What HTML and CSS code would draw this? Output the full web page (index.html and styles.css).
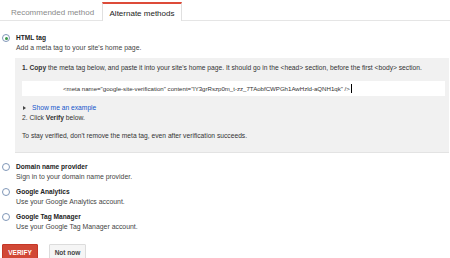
FILE: index.html
```html
<!DOCTYPE html>
<html>
<head>
<meta charset="utf-8">
<link rel="stylesheet" href="styles.css">
</head>
<body>
<div class="tabs">
  <div class="tab">Recommended method</div>
  <div class="tab active">Alternate methods</div>
</div>
<div class="options">
  <div class="option first">
    <span class="radio checked"></span>
    <div class="body">
      <div class="title">HTML tag</div>
      <div class="desc">Add a meta tag to your site's home page.</div>
      <div class="box">
        <div class="step"><b>1. Copy</b> the meta tag below, and paste it into your site's home page. It should go in the &lt;head&gt; section, before the first &lt;body&gt; section.</div>
        <div class="code">&lt;meta name="google-site-verification" content="lY3grRszp0m_t-zz_7TAobfCWPGh1AwHzld-aQNH1qk" /&gt;<span class="caret"></span></div>
        <div class="example"><span class="tri"></span><span class="link">Show me an example</span></div>
        <div class="step2">2. Click <b>Verify</b> below.</div>
        <div class="note">To stay verified, don't remove the meta tag, even after verification succeeds.</div>
      </div>
    </div>
  </div>
  <div class="option">
    <span class="radio"></span>
    <div class="body">
      <div class="title">Domain name provider</div>
      <div class="desc">Sign in to your domain name provider.</div>
    </div>
  </div>
  <div class="option">
    <span class="radio"></span>
    <div class="body">
      <div class="title">Google Analytics</div>
      <div class="desc">Use your Google Analytics account.</div>
    </div>
  </div>
  <div class="option">
    <span class="radio"></span>
    <div class="body">
      <div class="title">Google Tag Manager</div>
      <div class="desc">Use your Google Tag Manager account.</div>
    </div>
  </div>
</div>
<div class="actions">
  <button class="btn verify">VERIFY</button>
  <button class="btn notnow">Not now</button>
</div>
</body>
</html>
```
FILE: styles.css
```css
html, body {
  margin: 0;
  padding: 0;
  background: #fff;
}
body {
  width: 450px;
  height: 258px;
  overflow: hidden;
  font-family: "Liberation Sans", Arial, sans-serif;
  font-size: 6.9px;
  color: #333;
}
.tabs {
  display: flex;
  height: 20px;
  padding: 0 0 0 3px;
  border-bottom: 1px solid #e5e5e5;
  box-sizing: content-box;
}
.tab {
  width: 99px;
  box-sizing: border-box;
  display: flex;
  align-items: center;
  justify-content: center;
  padding-top: 4px;
  color: #8a8a8a;
  font-size: 8px;
}
.tab.active {
  width: 80px;
  color: #222;
  background: #fff;
  border: 1px solid #e0e0e0;
  border-top: 2px solid #dd4b39;
  border-bottom: none;
  height: 19px;
  margin-top: 2px;
  padding-top: 1px;
  margin-bottom: -1px;
}
.options {
  padding: 12px 1px 0 2px;
}
.option {
  display: flex;
  margin-bottom: 5px;
}
.option.first {
  margin-bottom: 9px;
}
.radio {
  flex: none;
  width: 6px;
  height: 6px;
  border: 1px solid #8097b8;
  border-radius: 50%;
  margin-top: 1px;
  margin-right: 6px;
  position: relative;
}
.radio.checked::after {
  content: "";
  position: absolute;
  left: 1.5px;
  top: 1.5px;
  width: 3px;
  height: 3px;
  border-radius: 50%;
  background: #3a9a4a;
}
.body {
  flex: 1;
}
.title {
  font-weight: bold;
  font-size: 6.6px;
  color: #222;
  line-height: 10px;
}
.desc {
  color: #444;
  line-height: 10px;
}
.box {
  background: #f1f1f1;
  border-bottom: 1px solid #e3e3e3;
  margin: 5px 0 0 -1px;
  padding: 5px 4px 11px 7px;
  color: #333;
  font-size: 6.7px;
  line-height: 10px;
}
.code {
  background: #fff;
  height: 15px;
  margin-top: 8px;
  display: flex;
  align-items: center;
  padding-left: 41px;
  font-size: 6.1px;
  color: #333;
}
.caret {
  display: inline-block;
  width: 1px;
  height: 9px;
  background: #000;
  margin-left: 1px;
}
.example {
  margin-top: 7px;
  display: flex;
  align-items: center;
}
.tri {
  width: 0;
  height: 0;
  border-top: 2.5px solid transparent;
  border-bottom: 2.5px solid transparent;
  border-left: 3px solid #444;
  margin: 0 6px 0 1px;
}
.link {
  color: #15c;
}
.note {
  margin-top: 8px;
}
.actions {
  display: flex;
  gap: 11px;
  padding: 7px 0 0 2px;
}
.btn {
  font-family: "Liberation Sans", Arial, sans-serif;
  font-size: 6.5px;
  font-weight: bold;
  height: 16px;
  border-radius: 1px;
  padding: 0;
}
.verify {
  width: 36px;
  background: #d14836;
  border: 1px solid #c53727;
  color: #fff;
}
.notnow {
  width: 37px;
  background: #f5f5f5;
  border: 1px solid #dcdcdc;
  color: #444;
}
```
